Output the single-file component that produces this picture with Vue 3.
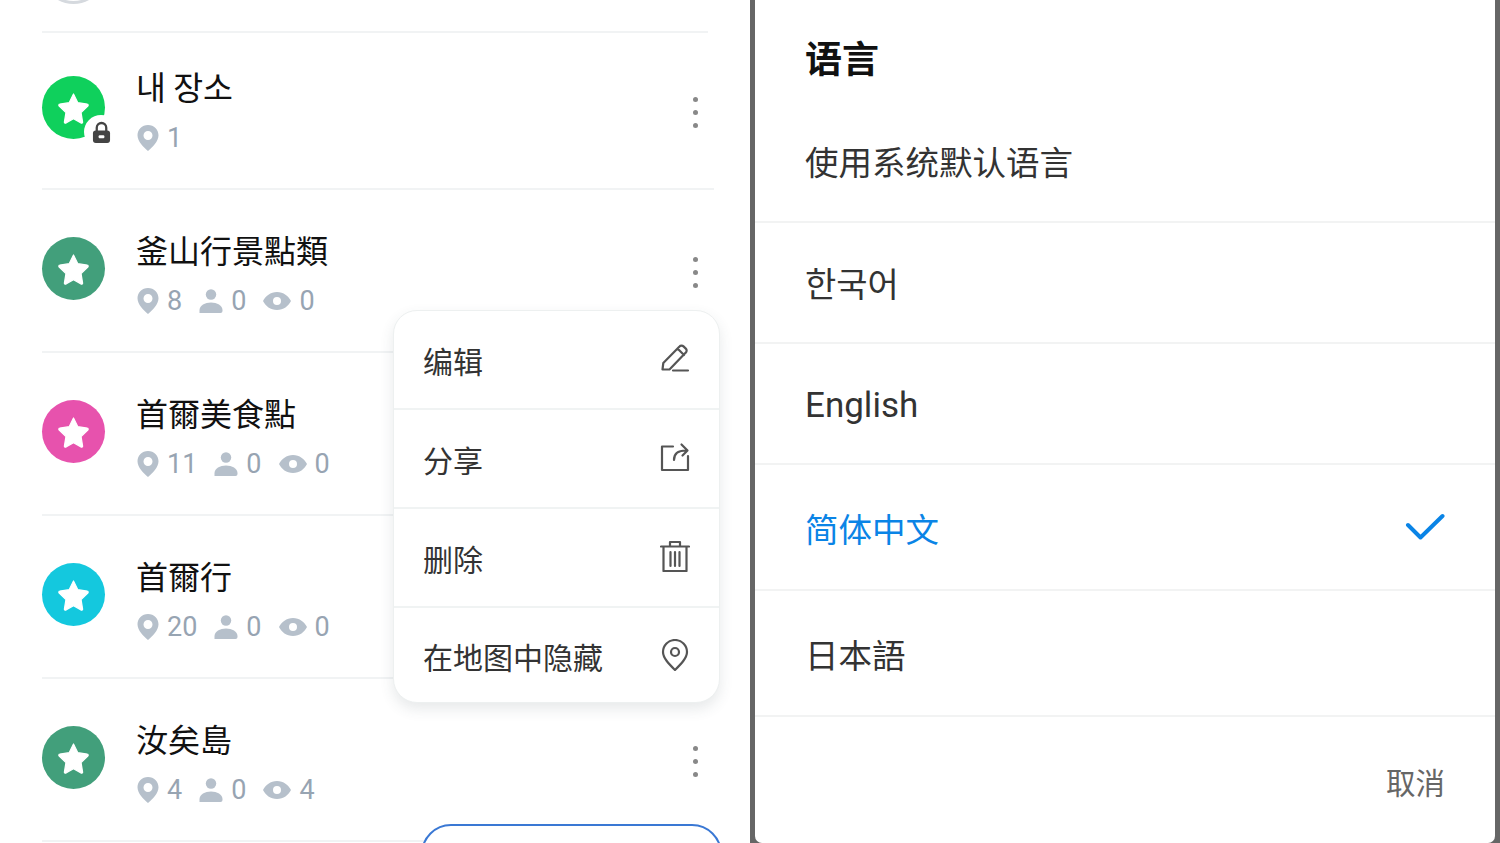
<script setup>
const lists = [
  { id: 1, title: '내 장소', color: '#0fd05c', lock: true, stats: ['1'], kr: true, cls: 'first' },
  { id: 2, title: '釜山行景點類', color: '#429f7b', stats: ['8', '0', '0'] },
  { id: 3, title: '首爾美食點', color: '#e752ad', stats: ['11', '0', '0'] },
  { id: 4, title: '首爾行', color: '#14c8de', stats: ['20', '0', '0'] },
  { id: 5, title: '汝矣島', color: '#429f7b', stats: ['4', '0', '4'] },
]
const menu = ['编辑', '分享', '删除', '在地图中隐藏']
const langs = [
  { label: '使用系统默认语言', cls: 'plain' },
  { label: '한국어', cls: 'plain kr' },
  { label: 'English', cls: 'plain latin' },
  { label: '简体中文', cls: 'tall active' },
  { label: '日本語', cls: 'tall' },
]
</script>

<template>
  <div class="screen">
    <section class="left">
      <div class="peek"><span class="peek-circle"></span></div>
      <div v-for="item in lists" :key="item.id" class="row" :class="item.cls">
        <div class="avatar" :style="{ background: item.color }">
          <svg viewBox="0 0 24 24" width="37" height="37"><path d="M12 3.200l2.800 5.700 6.100.9a.7.7 0 0 1 .4 1.200l-4.400 4.300 1 6.100a.7.7 0 0 1-1 .7L12 19.200l-4.900 2.900a.7.7 0 0 1-1-.7l1-6.100-4.400-4.300a.7.7 0 0 1 .4-1.200l6.100-.9z" fill="#fff" stroke="#fff" stroke-width=".8" stroke-linejoin="round"/></svg>
          <span v-if="item.lock" class="lock">
            <svg viewBox="0 0 20 24" width="19" height="23"><path d="M5 11V7a5 5 0 0 1 10 0v4" fill="none" stroke="#444" stroke-width="2.400"/><rect x="1" y="10" width="18" height="13" rx="3" fill="#444"/><rect x="7" y="15" width="6" height="3" rx="1" fill="#fff"/></svg>
          </span>
        </div>
        <div class="info">
          <div class="title" :class="{ kr: item.kr }">{{ item.title }}</div>
          <div class="stats">
            <span class="stat">
              <svg viewBox="0 0 22 26" width="22" height="26"><path fill-rule="evenodd" d="M11 0C5 0 .5 4.500 .5 10.300c0 6 6 12 10.500 15.700 4.500-3.700 10.500-9.700 10.500-15.700C21.500 4.500 17 0 11 0zm0 6a4.500 4.500 0 1 1 0 9 4.500 4.500 0 0 1 0-9z" fill="#b6c0cb"/></svg>
              <span>{{ item.stats[0] }}</span>
            </span>
            <template v-if="item.stats.length > 1">
              <span class="stat">
                <svg viewBox="0 0 24 24" width="24" height="24"><circle cx="12" cy="5.500" r="5.200" fill="#b6c0cb"/><path d="M.5 24v-3C.5 16.500 6 13.500 12 13.500S23.500 16.500 23.500 21v1a2 2 0 0 1-2 2z" fill="#b6c0cb"/></svg>
                <span>{{ item.stats[1] }}</span>
              </span>
              <span class="stat">
                <svg viewBox="0 0 28 18" width="28" height="18"><path fill-rule="evenodd" d="M14 0C7.500 0 2.500 4 0 9c2.500 5 7.500 9 14 9s11.500-4 14-9c-2.500-5-7.500-9-14-9zm0 5a4 4 0 1 1 0 8 4 4 0 0 1 0-8z" fill="#b6c0cb"/></svg>
                <span>{{ item.stats[2] }}</span>
              </span>
            </template>
          </div>
        </div>
        <div class="dots"><i></i><i></i><i></i></div>
      </div>

      <div class="menu">
        <div v-for="(m, i) in menu" :key="m" class="menu-row">
          <span>{{ m }}</span>
          <svg v-if="i === 0" viewBox="0 0 30 30" width="30" height="30" class="micon"><path d="M2.500 26.500l.8-6.500L19.500 3.500a2.800 2.800 0 0 1 4-.1l2.300 2.200a2.800 2.800 0 0 1 0 4L9.500 26.500zM17.500 5.500l6.500 6.500M13 27.500h15"/></svg>
          <svg v-else-if="i === 1" viewBox="0 0 30 30" width="30" height="30" class="micon"><path d="M13 4.500H2V28h26V14M14 18c0-6 3-9.500 12-9.500M21.500 2.500l6 6-5 5"/></svg>
          <svg v-else-if="i === 2" viewBox="0 0 30 32" width="30" height="32" class="micon"><path d="M1 6.500h28M10 6.500V2h10v4.500M3.500 6.500V31h23V6.500M10.500 12v14M15 12v14M19.500 12v14"/></svg>
          <svg v-else viewBox="0 0 30 32" width="30" height="32" class="micon"><path d="M15 31C9 25 3 19 3 13A12 12 0 0 1 27 13c0 6-6 12-12 18z"/><circle cx="15" cy="13" r="4"/></svg>
        </div>
      </div>
      <div class="fab"></div>
    </section>

    <section class="right">
      <div class="sheet">
        <h2 class="dialog-title">语言</h2>
        <div v-for="l in langs" :key="l.label" class="lang" :class="l.cls">
          <span>{{ l.label }}</span>
          <svg v-if="l.cls.includes('active')" viewBox="0 0 40 28" width="40" height="28"><path d="M3 12l12.500 12.500L37.500 3" fill="none" stroke="#0a84e6" stroke-width="4" stroke-linecap="round" stroke-linejoin="round"/></svg>
        </div>
        <div class="cancel">取消</div>
      </div>
    </section>
  </div>
</template>

<style>
html, body { margin: 0; background: #fff; overflow: hidden; }
</style>

<style scoped>
.screen {
  width: 1500px;
  height: 843px;
  display: flex;
  overflow: hidden;
  background: #fff;
  font-family: Roboto, "Noto Sans CJK SC", sans-serif;
}
.left {
  position: relative;
  width: 750px;
  flex: none;
  padding-left: 42px;
  box-sizing: border-box;
}
.peek {
  height: 31px;
  width: 666px;
  border-bottom: 2px solid #f1f3f4;
  overflow: hidden;
  position: relative;
}
.peek-circle {
  position: absolute;
  left: 0;
  top: -59px;
  width: 63px;
  height: 63px;
  box-sizing: border-box;
  border: 3px solid #d5d9de;
  border-radius: 50%;
}
.row {
  height: 161px;
  width: 672px;
  border-bottom: 2px solid #f1f3f4;
  display: flex;
  align-items: center;
}
.row.first { height: 155px; }
.avatar {
  position: relative;
  width: 63px;
  height: 63px;
  flex: none;
  border-radius: 50%;
  display: flex;
  align-items: center;
  justify-content: center;
  margin-bottom: 5px;
}
.first .avatar { margin-bottom: 6px; }
.lock {
  position: absolute;
  right: -13px;
  bottom: -10px;
  width: 34px;
  height: 34px;
  border-radius: 50%;
  background: #fff;
  display: flex;
  align-items: center;
  justify-content: center;
}
.info {
  margin-left: 31px;
  flex: 1;
  display: flex;
  flex-direction: column;
  gap: 16px;
  margin-top: 8px;
}
.first .info { gap: 19px; margin-top: -1px; }
.title {
  font-size: 32px;
  line-height: 36px;
  color: #111;
}
.title.kr { font-family: "Noto Sans CJK KR", sans-serif; font-size: 32.500px; }
.stats {
  display: flex;
  align-items: center;
  gap: 17px;
  margin-left: 1px;
  color: #97a4b2;
  font-size: 27px;
  line-height: 30px;
}
.stat { display: flex; align-items: center; gap: 8px; }
.dots {
  width: 8px;
  margin-right: 13px;
  display: flex;
  flex-direction: column;
  gap: 8px;
  margin-top: 3px;
}
.dots i {
  width: 5px;
  height: 5px;
  border-radius: 50%;
  background: #888;
}
.menu {
  position: absolute;
  left: 393px;
  top: 310px;
  width: 327px;
  height: 393px;
  box-sizing: border-box;
  background: #fff;
  border: 1px solid #edf0f0;
  border-radius: 24px;
  box-shadow: 0 6px 14px rgba(60, 70, 80, 0.12);
  display: flex;
  flex-direction: column;
}
.menu-row {
  height: 99px;
  box-sizing: border-box;
  flex: none;
  display: flex;
  align-items: center;
  justify-content: space-between;
  padding: 0 29px;
  border-bottom: 2px solid #f0f3f3;
  font-size: 30px;
  color: #333;
}
.menu-row:last-child { border-bottom: 0; flex: 1; padding-top: 2px; }
.micon {
  fill: none;
  stroke: #555;
  stroke-width: 2.200;
  stroke-linejoin: round;
  stroke-linecap: round;
  margin-bottom: 3px;
}
.fab {
  position: absolute;
  left: 421px;
  top: 824px;
  width: 301px;
  height: 60px;
  box-sizing: border-box;
  background: #fff;
  border: 2px solid #3a78d4;
  border-radius: 30px;
}
.right {
  flex: 1;
  background: #666;
  padding: 0 5px;
  display: flex;
}
.sheet {
  flex: 1;
  display: flex;
  flex-direction: column;
  background: #fff;
  border-radius: 0 0 7px 7px;
}
.dialog-title {
  margin: 0;
  height: 103px;
  padding: 38px 0 0 50px;
  box-sizing: border-box;
  font-size: 37px;
  line-height: 46px;
  font-weight: 700;
  color: #111;
}
.lang {
  display: flex;
  align-items: center;
  justify-content: space-between;
  padding: 0 50px;
  border-bottom: 2px solid #f2f3f3;
  font-size: 33.500px;
  color: #333;
  box-sizing: border-box;
}
.plain { height: 121px; }
.tall { height: 126px; }
.dialog-title + .lang { height: 120px; padding-bottom: 4px; }
.kr { font-size: 34px; font-family: "Noto Sans CJK KR", sans-serif; }
.latin { font-size: 35px; padding-top: 4px; }
.active { color: #0a84e6; }
.cancel {
  align-self: flex-end;
  margin: 48px 50px 0 0;
  font-size: 29.500px;
  line-height: 38px;
  color: #666;
}
</style>
